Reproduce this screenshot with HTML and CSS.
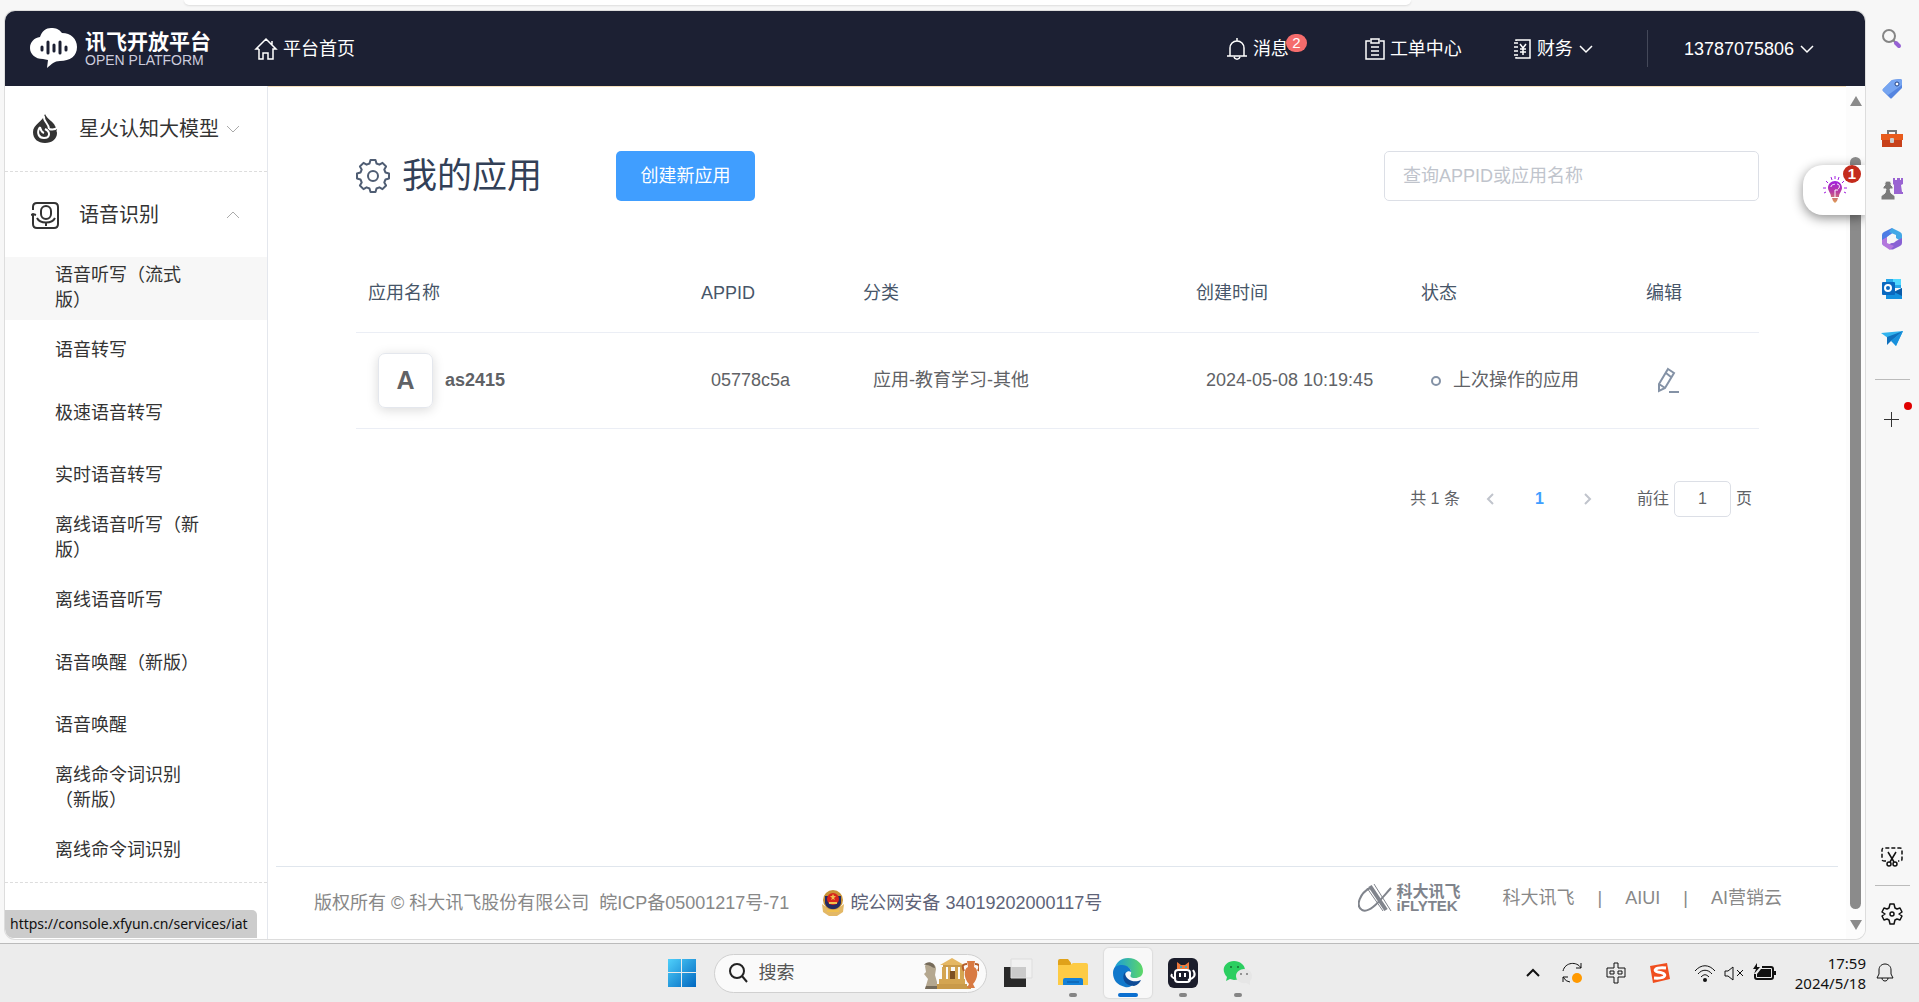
FILE: index.html
```html
<!DOCTYPE html>
<html lang="zh-CN">
<head>
<meta charset="UTF-8">
<title>我的应用 - 讯飞开放平台</title>
<link rel="stylesheet" href="styles.css">
</head>
<body>
 <div class="browser_top"><div class="address_bar"></div></div>

 <div class="browser_body">
  <div class="window">
   <header class="header">
    <a class="logo" href="#">
     <svg width="48" height="42" viewBox="0 0 48 42"><path fill="#fff" d="M13 31C5 31 0 26 0 20c0-6 4-10 10-11C12 3 16 0 21 0c5 0 8 1 11 5 9 0 15 6 15 14 0 9-7 14-17 14-6 0-8 3-13 7l1-8z"/><path stroke="#1c2033" stroke-width="3" stroke-linecap="round" d="M12 19v3M18 14v11M24 17v6M30 14v11M36 19v3"/></svg>
     <span class="logo_text"><b>讯飞开放平台</b><small>OPEN PLATFORM</small></span>
    </a>
    <a class="nav home" href="#">
     <svg width="24" height="24" viewBox="0 0 24 24" class="line"><path d="M5 12v10h4v-6h5v6h5V12h3L12 2 2 12h3M18 4v4"/></svg>
     平台首页
    </a>
    <nav class="nav_right">
     <a class="nav message" href="#">
      <svg width="22" height="24" viewBox="0 0 22 24" class="line"><path d="M1 19h20M4 19v-8c0-4 3-7 7-7s7 3 7 7v8M11 1v3M8 20c1 3 5 3 6 0"/></svg>
      消息<span class="nav_badge">2</span>
     </a>
     <a class="nav order" href="#">
      <svg width="20" height="24" viewBox="0 0 20 24" class="line"><path d="M5 4H1v18h18V4h-4M6 2h8v4H6zM6 10h8M6 14h8M6 18h8"/></svg>
      工单中心
     </a>
     <a class="nav money" href="#">
      <svg width="20" height="24" viewBox="0 0 20 24" class="line"><path d="M4 4V3h14v18H4v-1M2 6h4M2 10h4M2 14h4M2 18h4M8 7l3 4 3-4M11 11v7M8 12h6M8 15h6"/></svg>
      财务
      <svg width="16" height="10" viewBox="0 0 16 10" class="line"><path d="M2 2l6 6 6-6"/></svg>
     </a>
     <a class="nav user" href="#">
      13787075806
      <svg width="16" height="10" viewBox="0 0 16 10" class="line"><path d="M2 2l6 6 6-6"/></svg>
     </a>
    </nav>
   </header>

   <div class="page">
    <aside class="side">
     <button class="side_head closed">
      <svg width="28" height="30" viewBox="0 0 28 30"><path fill="#333" d="M14 0c2 5 9 8 10 12l2 3c-1 3 0 2 0 4 0 6-5 10-12 10S2 25 2 18c0-8 10-10 12-18z"/><path d="M13 2c-1 6 5 7 5 13M27 13c-3 3-6 3-9 2M9 13c-4 6-1 11 4 11 6 0 7-6 1-9M9 13c1 3 1 5 4 6" fill="none" stroke="#fff" stroke-width="2"/></svg>
      <span>星火认知大模型</span>
      <svg width="14" height="10" viewBox="0 0 14 10" class="arrow"><path d="M1 2l6 6 6-6"/></svg>
     </button>
     <button class="side_head">
      <svg width="28" height="28" viewBox="0 0 28 28" fill="none" stroke="#333" stroke-width="2"><path d="M2 9V6c0-3 1-4 4-4h17c3 0 4 1 4 4v17c0 3-1 4-4 4H6c-3 0-4-1-4-4V13M0 14l2-1 3 1"/><rect x="10" y="5" width="10" height="13" rx="5"/><path d="M6 17c3 6 15 6 18 0M15 21v4"/></svg>
      <span>语音识别</span>
      <svg width="14" height="10" viewBox="0 0 14 10" class="arrow"><path d="M1 8l6-6 6 6"/></svg>
     </button>
     <ul class="side_list">
      <li class="on"><a href="#">语音听写（流式版）</a></li>
      <li><a href="#">语音转写</a></li>
      <li><a href="#">极速语音转写</a></li>
      <li><a href="#">实时语音转写</a></li>
      <li><a href="#">离线语音听写（新版）</a></li>
      <li><a href="#">离线语音听写</a></li>
      <li><a href="#">语音唤醒（新版）</a></li>
      <li><a href="#">语音唤醒</a></li>
      <li><a href="#">离线命令词识别（新版）</a></li>
      <li><a href="#">离线命令词识别</a></li>
     </ul>
    </aside>

    <main class="main">
     <div class="content">
      <div class="title_row">
       <svg width="34" height="34" viewBox="-17 -17 34 34" fill="none" stroke="#4f5d73" stroke-width="2"><path stroke-linejoin="round" d="M-3.500-12.500L-2.500-16 2.500-16 3.500-12.500 6.400-11.300 9.500-13.100 13.100-9.500 11.300-6.400 12.500-3.500 16-2.500 16 2.500 12.500 3.500 11.300 6.400 13.100 9.500 9.500 13.100 6.400 11.300 3.500 12.500 2.500 16-2.500 16-3.500 12.500-6.400 11.300-9.500 13.100-13.100 9.500-11.300 6.400-12.500 3.500-16 2.500-16-2.500-12.500-3.500-11.300-6.400-13.100-9.500-9.500-13.100-6.400-11.300z"/><circle r="5"/></svg>
       <h1>我的应用</h1>
       <button class="create">创建新应用</button>
       <input class="search" type="text" placeholder="查询APPID或应用名称" aria-label="查询APPID或应用名称">
      </div>

      <table class="app_table">
       <colgroup><col><col class="c_id"><col><col class="c_time"><col class="c_status"><col class="c_edit"></colgroup>
       <thead>
        <tr><th>应用名称</th><th>APPID</th><th>分类</th><th>创建时间</th><th>状态</th><th>编辑</th></tr>
       </thead>
       <tbody>
        <tr>
         <td><div class="app_name"><span class="app_icon">A</span><b>as2415</b></div></td>
         <td>05778c5a</td>
         <td>应用-教育学习-其他</td>
         <td>2024-05-08 10:19:45</td>
         <td><span class="dot"></span>上次操作的应用</td>
         <td><button class="edit" aria-label="编辑"><svg width="24" height="26" viewBox="0 0 24 26" fill="none" stroke="#8492a6" stroke-width="2"><path d="M12 2l6 4-9 15-6 3v-7zM10 6l5 4M3 17l6 4M13 25h10"/></svg></button></td>
        </tr>
       </tbody>
      </table>

      <div class="pager">
       <span>共 1 条</span>
       <button class="page_btn" aria-label="上一页"><svg width="10" height="14" viewBox="0 0 10 14"><path d="M8 2L3 7l5 5"/></svg></button>
       <button class="page_btn current">1</button>
       <button class="page_btn" aria-label="下一页"><svg width="10" height="14" viewBox="0 0 10 14"><path d="M2 2l5 5-5 5"/></svg></button>
       <label for="go">前往</label>
       <input id="go" type="text" value="1">
       <span>页</span>
      </div>
     </div>

     <footer class="footer">
      <span>版权所有 © 科大讯飞股份有限公司</span>
      <a class="icp" href="#">皖ICP备05001217号-71</a>
      <a class="police" href="#">
       <svg width="24" height="26" viewBox="0 0 24 26"><path fill="#e3b866" d="M1 14l4 3h14l4-3-1 8-6 4H8l-6-4z"/><ellipse cx="12" cy="10" rx="10" ry="10" fill="#c99336"/><path fill="#232a63" d="M4 6h16v7c-1 4-4 6-8 6s-7-2-8-6z"/><circle cx="12" cy="9" r="6" fill="#d8261c"/><path fill="#f0c04e" d="M12 4l1 2h2l-2 2 1 2-2-1-2 1 1-2-2-2h2zM8 12h8v2H8zM6 20h12v2H6z"/></svg>
       皖公网安备 34019202000117号
      </a>
      <div class="footer_right">
       <a class="ifly" href="#">
        <svg width="36" height="30" viewBox="0 0 36 30" fill="none" stroke="#80848c"><path stroke-width="2" d="M12 5C2 10-3 23 4 27c8 4 18-10 29-22"/><path stroke-width="4" d="M12 3l16 24"/><path stroke-width="1" d="M16 1l17 27M9 5l16 23"/></svg>
        <span><b>科大讯飞</b><b class="en">iFLYTEK</b></span>
       </a>
       <a href="#">科大讯飞</a><i>|</i><a href="#">AIUI</a><i>|</i><a href="#">AI营销云</a>
      </div>
     </footer>
    </main>

    <div class="scroll">
     <svg width="12" height="10" viewBox="0 0 12 10"><path d="M6 0l6 10H0z"/></svg>
     <div class="thumb"></div>
     <svg width="12" height="10" viewBox="0 0 12 10"><path d="M6 10l6-10H0z"/></svg>
    </div>
   </div>

   <button class="float_tip" aria-label="提示">
    <svg width="24" height="28" viewBox="0 0 24 28"><defs><linearGradient id="bulb" x2="0" y2="1"><stop offset="0" stop-color="#a01fe0"/><stop offset=".5" stop-color="#b93ca0"/><stop offset="1" stop-color="#e0a050"/></linearGradient></defs><path fill="url(#bulb)" d="M12 5c4 0 7 3 7 7 0 3-3 5-3 9H8c0-4-3-6-3-9 0-4 3-7 7-7zM9 22h6l-1 3-2 2-2-2z"/><path stroke="#a01fe0" fill="none" d="M0 12h3M24 12h-3M3 5l2 2M21 5l-2 2M8 1l1 3M16 1l-1 3M12 0v3M1 17l2-1M23 17l-2-1"/><path stroke="#fff" fill="none" d="M8 11c0-3 3-2 4-3M12 21v-7h3M14 8c3 0 3 4 1 5"/></svg>
    <span>1</span>
   </button>
   <div class="link_tip">https://console.xfyun.cn/services/iat</div>
  </div>

  <div class="edge_bar">
   <button aria-label="搜索"><svg width="22" height="22" viewBox="0 0 22 22" fill="none"><circle cx="8" cy="8" r="6" stroke="#858585" stroke-width="2"/><path stroke="#858585" stroke-width="2" d="M12 12l3 3"/><path stroke="#9661d4" stroke-width="4" stroke-linecap="round" d="M15 15l3 3"/></svg></button>
   <button aria-label="购物"><svg width="22" height="22" viewBox="0 0 22 22"><path fill="#5585e0" d="M11 2l8-1q2 0 2 2v7L11 20q-1 1-2 0l-7-7q-1-1 0-2z"/><path fill="#76a5f1" d="M11 2l8-1q2 0 2 2v4L7 17l-5-4q-1-1 0-2z"/><circle cx="16" cy="6" r="2" fill="#fff" stroke="#1d4086"/></svg></button>
   <button aria-label="工具"><svg width="22" height="22" viewBox="0 0 22 22"><path fill="none" stroke="#777" stroke-width="2" d="M7 7V3h8v4"/><path fill="#c7401a" d="M1 11h20v8H1z"/><path fill="#e85b1c" d="M0 6h22v6H0z"/><rect x="9" y="10" width="4" height="5" rx="1" fill="#ccc"/></svg></button>
   <button aria-label="游戏"><svg width="22" height="22" viewBox="0 0 22 22"><path fill="#9a64d2" d="M12 0h2v2h2V0h3v2h1V0h2v6l-2 1 1 7h1v2h-9V7l-1-1z"/><path fill="#7b7b7b" stroke="#f7f7f7" d="M0 22v-4l4-3 1-4H2V9l2-2q-1-4 3-4 4 0 3 4l2 2v2H9l1 4 4 3v4z"/></svg></button>
   <button aria-label="Microsoft 365"><svg width="22" height="22" viewBox="0 0 22 22"><path fill="#4c7ce5" d="M11 0L3 4q-2 1-2 3v8q1 4 5 2V9l7-5z"/><path fill="#42a8e6" d="M11 0l8 4q2 1 2 3v7l-6-4V7L8 4z"/><path fill="#8861d4" d="M21 10v5q0 2-2 3l-6 3q-2 1-4 0l-5-3 11-5z"/><path fill="#b377dd" d="M1 12v3q0 2 2 3l6 4 4-4-7-3V9z"/><circle cx="11" cy="11" r="4" fill="#f7f7f7"/></svg></button>
   <button aria-label="Outlook"><svg width="22" height="22" viewBox="0 0 22 22"><path fill="#28a8ea" d="M5 1h15v9H5z"/><path fill="#50d9ff" d="M12 1h8v6h-8z"/><path fill="#1490df" d="M5 10l8 4 8-4v11H5z"/><path fill="#0a5ba8" d="M13 14l8-4v8z"/><rect x="1" y="4" width="13" height="13" rx="1" fill="#0a69c0"/><circle cx="7" cy="10" r="3" fill="none" stroke="#fff" stroke-width="2"/></svg></button>
   <button aria-label="Drop"><svg width="22" height="22" viewBox="0 0 22 22"><path fill="#31b3ee" d="M0 5l22-2-7 15-4-5z"/><path fill="#0f70bd" d="M22 3L6 9v8l4-4z"/><path fill="#1890dc" d="M22 3l-7 15-5-5z"/></svg></button>
   <hr>
   <button class="add" aria-label="添加"><svg width="22" height="22" viewBox="0 0 22 22"><path stroke="#333" d="M10.500 3v15M3 10.500h15"/></svg></button>
   <button class="shot" aria-label="截图"><svg width="22" height="22" viewBox="0 0 22 22" fill="none" stroke="#111" stroke-width="1.500"><path stroke-dasharray="4 2" d="M5 15H3q-2 0-2-2V4q0-2 2-2h16q2 0 2 2v9q0 2-2 2h-2"/><path d="M7 6l6 10M15 6L9 16"/><circle cx="8" cy="18" r="2"/><circle cx="14" cy="18" r="2"/></svg></button>
   <hr>
   <button aria-label="设置"><svg width="22" height="22" viewBox="0 0 22 22" fill="none" stroke="#111" stroke-width="1.500"><path stroke-linejoin="round" d="M9 1h4l1 4 2 1 3-1 2 4-3 2 3 2-2 4-3-1-2 1-1 4H9l-1-4-2-1-3 1-2-4 3-2-3-2 2-4 3 1 2-1z"/><circle cx="11" cy="11" r="2"/></svg></button>
  </div>
 </div>

 <div class="taskbar">
  <div class="apps">
   <button class="start" aria-label="开始"><svg width="30" height="30" viewBox="0 0 30 30"><defs><linearGradient id="win" x2="1" y2="1"><stop offset="0" stop-color="#4fd0fb"/><stop offset="1" stop-color="#0067c0"/></linearGradient></defs><path fill="url(#win)" d="M1 1h13v13H1zM15 1h14v13H15zM1 15h13v14H1zM15 15h14v14H15z"/></svg></button>
   <label class="task_search">
    <svg width="20" height="20" viewBox="0 0 20 20" fill="none" stroke="#222" stroke-width="2"><circle cx="9" cy="8" r="7"/><path d="M14 13l5 6"/></svg>
    <input type="text" placeholder="搜索" aria-label="搜索">
    <svg width="56" height="32" viewBox="0 0 56 32"><path fill="#c99a4a" d="M14 27h30v2h4v3H14zM20 8h20v2H20z"/><path fill="#e5b763" d="M17 8L29 1l12 7z"/><path fill="#d4a552" d="M19 10h4v13h-4zM25 10h3v13h-3zM32 10h3v13h-3zM37 10h4v13h-4zM16 22h26v5H16z"/><path fill="#7d5022" d="M27 14h5v8h-5z"/><path fill="#b4a78f" d="M2 9c2-5 11-4 11 3l-1 6 2 7v7H2l3-10-4-5 2-2z"/><path fill="#756b5a" d="M1 8c3-5 11-3 11 3-3 0-6-4-11-3zM3 29h11v3H2z"/><path fill="#d87a42" d="M44 4h8l-1 6c5 2 4 12-1 17l2 4h-8l2-4c-5-5-6-15-1-17z"/><path fill="none" stroke="#b55e2b" stroke-width="2" d="M44 7c-5 0-5 3-3 7M52 7c5 0 5 3 3 7"/></svg>
   </label>
   <button aria-label="任务视图"><svg width="30" height="30" viewBox="0 0 30 30"><path fill="#292929" d="M1 9h22v20H1z"/><path fill="#f3f3f3" stroke="#ddd" fill-opacity=".8" d="M8 1h21v19H8z"/></svg></button>
   <button class="run" aria-label="文件资源管理器"><svg width="30" height="30" viewBox="0 0 30 30"><path fill="#e0a21a" d="M0 3q0-2 2-2h8l3 4v6H0z"/><path fill="#fdcb45" d="M0 7h12l3-2h13q2 0 2 2v20H0z"/><path fill="#1380d8" d="M5 27v-5q0-2 2-2h16q2 0 2 2v5z"/><path stroke="#0a559e" d="M9 24h12"/></svg></button>
   <button class="run active" aria-label="Edge"><svg width="30" height="30" viewBox="0 0 30 30"><defs><linearGradient id="edge" x2="1"><stop offset="0" stop-color="#199bdc"/><stop offset="1" stop-color="#5ed866"/></linearGradient></defs><path fill="url(#edge)" d="M1 12C3 4 8 0 15 0c9 0 15 6 15 13 0 5-4 7-8 7-5 0-5-2-4-4 1-4-2-8-8-8-4 0-7 1-9 4z"/><path fill="#1178cb" d="M0 15C0 9 4 7 9 7c6 0 9 4 9 7-3-2-7 1-6 5 1 5 6 7 10 6-3 3-6 5-10 4C4 27 0 22 0 15z"/><path fill="#0d4b96" d="M12 14c-4 5-1 14 9 14 4-1 6-4 7-6-6 3-16 1-16-8z"/></svg></button>
   <button class="run" aria-label="应用"><svg width="30" height="30" viewBox="0 0 30 30"><rect width="30" height="30" rx="6" fill="#1b1d2b"/><path fill="#ef793b" d="M9 4l4 3h4l4-3v7H9z"/><path fill="#45a7b5" d="M12 8h2v2h-2zM17 8h2v2h-2z"/><rect x="7" y="12" width="15" height="12" rx="3" fill="none" stroke="#fff" stroke-width="2"/><path stroke="#fff" stroke-width="2" fill="none" d="M12 15v4M17 15v4M4 16q-2 3 4 5M25 12q5 7-5 10"/></svg></button>
   <button class="run" aria-label="微信"><svg width="30" height="30" viewBox="0 0 30 30"><path fill="#2bce60" d="M11 3c6 0 11 4 11 9 0 6-5 10-11 10l-4-1-4 2 1-4C-3 12 2 3 11 3z"/><circle cx="8" cy="9" r="1" fill="#166b30"/><circle cx="15" cy="9" r="1" fill="#166b30"/><path fill="#e6e6e6" d="M21 11c5 0 8 3 8 7 0 3-1 4-2 5v4l-4-2c-6 1-10-3-10-7s4-7 8-7z"/><circle cx="18" cy="16" r="1" fill="#777"/><circle cx="24" cy="16" r="1" fill="#777"/></svg></button>
  </div>
  <div class="tray">
   <svg width="16" height="20" viewBox="0 0 16 20" class="ink"><path d="M2 13l6-6 6 6"/></svg>
   <svg width="22" height="22" viewBox="0 0 22 22" class="ink thin"><path d="M2 9c2-9 14-10 18-3M20 1v5h-5M2 20v-5h5M2 15q3 5 7 5"/><circle cx="16" cy="16" r="5" fill="#f90" stroke="none"/></svg>
   <svg width="20" height="22" viewBox="0 0 20 22" class="ink thin"><path d="M8 1h4v5h7v9h-7v6H8v-6H1V6h7zM4 9h4v3H4zM12 9h4v3h-4z"/></svg>
   <svg width="22" height="22" viewBox="0 0 22 22"><path fill="#f04e1e" d="M1 4l17-3 3 16-17 4z"/><path fill="none" stroke="#fff" stroke-width="3" d="M17 6c-12-1-13 3-8 4 10 1 9 7-4 6"/></svg>
   <svg width="22" height="20" viewBox="0 0 22 20" class="ink thin"><path d="M1 8c6-7 14-7 20 0M4 11c4-5 10-5 14 0M7 14c3-3 5-3 8 0"/><circle cx="11" cy="17" r="2" fill="#111" stroke="none"/></svg>
   <svg width="22" height="20" viewBox="0 0 22 20" class="ink thin"><path d="M2 8h3l5-4v13l-5-4H2zM14 7l6 6M20 7l-6 6"/></svg>
   <svg width="24" height="20" viewBox="0 0 24 20"><path fill="none" stroke="#111" stroke-width="2" d="M10 4h9q2 0 2 2v8q0 2-2 2H5q-2 0-2-2v-3"/><path fill="#111" d="M9 6h10v8H5v-3zM22 8h2v4h-2zM5 0L1 6h3L2 11l6-7H5z"/></svg>
   <div class="clock"><span>17:59</span><span>2024/5/18</span></div>
   <svg width="18" height="20" viewBox="0 0 18 20" class="ink thin"><path d="M1 15h16l-2-4V7c0-8-12-8-12 0v4zM6 15c0 4 6 4 6 0"/></svg>
  </div>
 </div>
</body>
</html>
```
FILE: styles.css
```css
* {
 box-sizing: border-box;
}
body {
 margin: 0;
 min-height: 100vh;
 display: flex;
 flex-direction: column;
 background: #f7f7f7;
 color: #333;
 font-family: "Liberation Sans", "Noto Sans CJK SC", sans-serif;
 font-size: 18px;
 line-height: 24px;
}
a {
 color: inherit;
 text-decoration: none;
}
button {
 padding: 0;
 border: 0;
 background: none;
 color: inherit;
 font: inherit;
 cursor: pointer;
}
input {
 font: inherit;
 color: #606266;
}
svg {
 display: block;
 flex: none;
}

/* browser frame */
.browser_top {
 height: 11px;
 padding: 0 508px 0 184px;
}
.address_bar {
 height: 5px;
 background: #fff;
 border-radius: 0 0 12px 12px;
 box-shadow: 0 1px 2px #ddd;
}
.browser_body {
 flex: 1;
 display: flex;
 padding: 0 0 4px 5px;
}
.window {
 position: relative;
 flex: 1;
 display: flex;
 flex-direction: column;
 background: #fff;
 border-radius: 10px;
 box-shadow: 0 0 0 1px #ddd;
 overflow: hidden;
}

/* header */
.header {
 height: 75px;
 padding: 0 50px 0 25px;
 display: flex;
 align-items: center;
 background: #1c2033;
 color: #fff;
}
.logo {
 display: flex;
 align-items: center;
 gap: 7px;
}
.logo_text b {
 display: block;
 font-size: 21px;
 line-height: 22px;
}
.logo_text small {
 display: block;
 font-size: 14px;
 line-height: 14px;
 color: #ccd;
}
.nav {
 display: flex;
 align-items: center;
 gap: 5px;
 white-space: nowrap;
}
.line {
 fill: none;
 stroke: currentColor;
 stroke-width: 1.5;
}
.home {
 margin-left: 43px;
}
.nav_right {
 margin-left: auto;
 display: flex;
 align-items: center;
}
.message {
 position: relative;
}
.nav_badge {
 position: absolute;
 left: 60px;
 top: -3px;
 width: 21px;
 height: 18px;
 border-radius: 9px;
 background: #f56c6c;
 font-size: 15px;
 line-height: 18px;
 text-align: center;
}
.order {
 margin-left: 71px;
}
.money {
 margin-left: 50px;
}
.user {
 margin-left: 53px;
 padding-left: 36px;
 height: 37px;
 border-left: 1px solid #444859;
}

/* left menu */
.page {
 flex: 1;
 display: flex;
}
.side {
 width: 263px;
 border-right: 1px solid #e4e7ed;
}
.side_head {
 display: flex;
 align-items: center;
 width: 100%;
 height: 85px;
 padding: 0 27px 0 26px;
 font-size: 20px;
 text-align: left;
}
.side_head.closed {
 height: 86px;
 border-bottom: 1px dashed #ddd;
}
.side_head span {
 flex: 1;
 margin-left: 20px;
 white-space: nowrap;
}
.arrow {
 fill: none;
 stroke: #aaa;
}
.side_list {
 list-style: none;
 margin: 0;
 padding: 0;
 min-height: 626px;
 display: grid;
 grid-auto-rows: 1fr;
 border-bottom: 1px dashed #ddd;
}
.side_list li {
 display: flex;
 align-items: center;
 padding: 0 62px 0 50px;
 line-height: 25px;
}
.side_list .on {
 background: #f7f7f7;
}

/* content */
.main {
 flex: 1;
 display: flex;
 flex-direction: column;
 border-top: 1px solid #f5e0bd;
}
.content {
 flex: 1;
 padding: 63px 87px 0 88px;
}
.title_row {
 display: flex;
 align-items: center;
 height: 52px;
}
h1 {
 margin: 0 74px 0 12px;
 font-size: 35px;
 font-weight: normal;
 line-height: 50px;
 color: #324057;
}
.create {
 width: 139px;
 height: 50px;
 border-radius: 5px;
 background: #409eff;
 color: #fff;
}
.search {
 margin-left: auto;
 width: 375px;
 height: 50px;
 padding: 0 18px;
 border: 1px solid #dcdfe6;
 border-radius: 5px;
}
.search::placeholder {
 color: #c0c4cc;
}
.app_table {
 width: 100%;
 margin-top: 52px;
 table-layout: fixed;
 border-collapse: collapse;
 color: #606266;
}
.c_id {
 width: 162px;
}
.c_time, .c_status {
 width: 225px;
}
.c_edit {
 width: 125px;
}
.app_table th {
 height: 78px;
 padding: 0 0 0 12px;
 font-weight: normal;
 text-align: left;
 color: #475669;
 border-bottom: 1px solid #ebeef5;
}
.app_table td {
 height: 96px;
 padding: 0 0 0 22px;
 white-space: nowrap;
 border-bottom: 1px solid #ebeef5;
}
.app_name {
 display: flex;
 align-items: center;
 gap: 12px;
}
.app_icon {
 width: 55px;
 height: 55px;
 border: 1px solid #e4e7ed;
 border-radius: 7px;
 box-shadow: 0 2px 12px rgba(0, 0, 0, .15);
 font-size: 25px;
 font-weight: bold;
 line-height: 53px;
 text-align: center;
}
.dot {
 display: inline-block;
 width: 10px;
 height: 10px;
 margin-right: 12px;
 border: 2px solid #8492a6;
 border-radius: 50%;
}
.edit {
 display: block;
}
.pager {
 display: flex;
 align-items: center;
 justify-content: flex-end;
 margin-top: 52px;
 padding-right: 7px;
 font-size: 16px;
 color: #606266;
}
.page_btn {
 display: flex;
 align-items: center;
 justify-content: center;
 width: 49px;
 height: 35px;
}
.page_btn svg {
 fill: none;
 stroke: #c0c4cc;
 stroke-width: 2;
}
.page_btn:nth-child(2) {
 margin-left: 6px;
}
.page_btn.current {
 color: #409eff;
 font-weight: bold;
}
.pager label {
 margin-left: 24px;
}
.pager input {
 width: 57px;
 height: 36px;
 margin: 0 5px;
 border: 1px solid #dcdfe6;
 border-radius: 5px;
 text-align: center;
}

/* footer */
.footer {
 display: flex;
 align-items: center;
 height: 73px;
 margin: 0 8px;
 padding: 0 56px 0 38px;
 border-top: 1px solid #e0e6ed;
 color: #888;
 white-space: nowrap;
}
.icp {
 margin-left: 10px;
}
.police {
 display: flex;
 align-items: center;
 gap: 5px;
 margin-left: 32px;
 color: #5e6378;
}
.footer_right {
 margin-left: auto;
 padding-bottom: 10px;
 display: flex;
 align-items: center;
}
.footer_right i {
 margin: 0 23px;
 font-style: normal;
}
.ifly {
 display: flex;
 align-items: center;
 gap: 3px;
 margin-right: 42px;
 color: #80848c;
}
.ifly b {
 display: block;
 font-size: 16px;
 line-height: 16px;
}
.ifly .en {
 font-size: 15px;
 line-height: 12px;
}

/* scrollbar */
.scroll {
 width: 19px;
 padding: 10px 0 9px;
 display: flex;
 flex-direction: column;
 align-items: center;
 background: #fcfcfc;
}
.scroll svg {
 fill: #8b8b8b;
}
.thumb {
 flex: 1;
 width: 11px;
 margin: 51px 0 11px;
 border-radius: 6px;
 background: #8b8b8b;
}

/* things that lie over the page */
.float_tip {
 position: absolute;
 right: 0;
 top: 154px;
 width: 62px;
 height: 50px;
 padding-left: 20px;
 border-radius: 20px 0 0 20px;
 background: #fff;
 box-shadow: 0 3px 12px rgba(0, 0, 0, .45);
}
.float_tip span {
 position: absolute;
 right: 4px;
 top: 0;
 width: 18px;
 height: 18px;
 border-radius: 50%;
 background: #c42b1c;
 color: #fff;
 font-size: 15px;
 font-weight: bold;
 line-height: 18px;
}
.link_tip {
 position: absolute;
 left: 0;
 bottom: 1px;
 padding: 0 9px 0 5px;
 background: #ccc;
 border-radius: 0 5px 0 8px;
 color: #111;
 font-family: "Noto Sans", sans-serif;
 font-size: 14px;
 line-height: 28px;
}

/* edge sidebar */
.edge_bar {
 width: 54px;
 padding-top: 3px;
 display: flex;
 flex-direction: column;
 align-items: center;
}
.edge_bar button {
 display: flex;
 align-items: center;
 justify-content: center;
 width: 50px;
 height: 50px;
}
.edge_bar hr {
 width: 35px;
 margin: 15px 0;
 border: 0;
 border-top: 1px solid #bbb;
}
.edge_bar .add {
 position: relative;
}
.add::after {
 content: "";
 position: absolute;
 right: 5px;
 top: 7px;
 width: 8px;
 height: 8px;
 border-radius: 50%;
 background: #e00000;
}
.edge_bar .shot {
 margin-top: auto;
}
.edge_bar .shot + hr {
 margin: 3px 0;
}

/* taskbar */
.taskbar {
 position: relative;
 display: flex;
 align-items: center;
 justify-content: center;
 height: 59px;
 border-top: 1px solid #bbb;
 background: #ececec;
}
.apps {
 display: flex;
 align-items: center;
 gap: 7px;
}
.apps button {
 position: relative;
 display: flex;
 align-items: center;
 justify-content: center;
 width: 48px;
 height: 50px;
 border-radius: 5px;
}
.task_search {
 display: flex;
 align-items: center;
 gap: 11px;
 width: 273px;
 height: 39px;
 margin-left: 1px;
 padding: 0 7px 0 13px;
 border: 1px solid #d0d0d0;
 border-radius: 20px;
 background: #fafafa;
}
.task_search input {
 flex: 1;
 min-width: 0;
 padding: 0;
 border: 0;
 outline: 0;
 background: none;
}
.task_search input::placeholder {
 color: #555;
}
.apps .active {
 background: #f8f8f8;
 box-shadow: 0 0 1px 1px #ddd;
}
.run::after {
 content: "";
 position: absolute;
 left: 20px;
 bottom: 1px;
 width: 8px;
 height: 4px;
 border-radius: 2px;
 background: #858585;
}
.active::after {
 left: 14px;
 width: 20px;
 background: #0b6fd0;
}
.tray {
 position: absolute;
 right: 25px;
 top: 0;
 height: 100%;
 display: flex;
 align-items: center;
}
.tray svg {
 margin-right: 7px;
}
.tray svg:nth-child(-n+4) {
 margin-right: 23px;
}
.tray svg:first-child {
 margin-right: 20px;
}
.tray svg:last-child {
 margin: 0 0 0 10px;
}
.ink {
 fill: none;
 stroke: #111;
 stroke-width: 2;
}
.ink.thin {
 stroke-width: 1;
}
.clock {
 margin-left: 12px;
 font-family: "Noto Sans", sans-serif;
 font-size: 15px;
 line-height: 20px;
 color: #111;
}
.clock span {
 display: block;
 text-align: right;
}
```
